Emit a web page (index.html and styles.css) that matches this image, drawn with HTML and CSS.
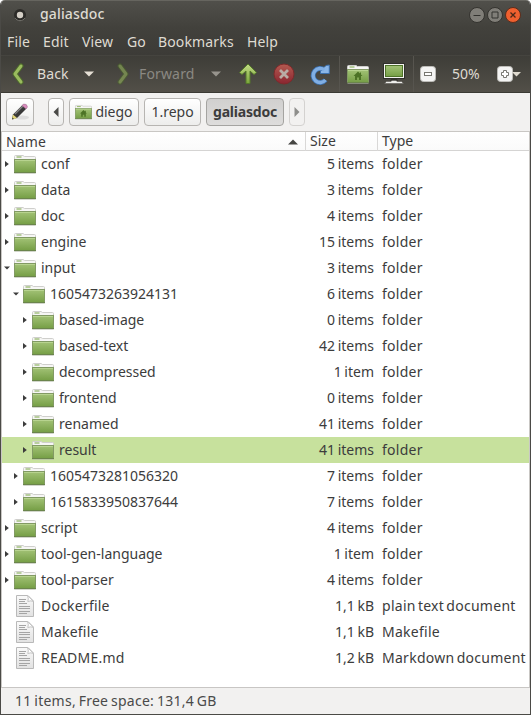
FILE: index.html
```html
<!DOCTYPE html>
<html lang="en">
<head>
<meta charset="utf-8">
<title>galiasdoc</title>
<link rel="stylesheet" href="styles.css">
</head>
<body>
<svg class="defs" aria-hidden="true">
  <defs>
    <linearGradient id="green" x1="0" y1="0" x2="0" y2="1"><stop offset="0" stop-color="#a3c377"/><stop offset="1" stop-color="#759e45"/></linearGradient>
    <linearGradient id="arrow" x1="0" y1="0" x2="0" y2="1"><stop offset="0" stop-color="#c3db86"/><stop offset="1" stop-color="#7aa63a"/></linearGradient>
    <linearGradient id="paper" x1="0" y1="0" x2="0" y2="1"><stop offset="0" stop-color="#fafafa"/><stop offset="1" stop-color="#e2e2e2"/></linearGradient>
    <linearGradient id="red" x1="0" y1="0" x2="0" y2="1"><stop offset="0" stop-color="#b45a50"/><stop offset="1" stop-color="#8a2530"/></linearGradient>
    <symbol id="folder" viewBox="0 0 22 20">
      <path d="M.5 19V2.500Q.5 1.500 1.500 1.500H9L10.500 2.500H20.500Q21.500 2.500 21.500 3.500V19Z" fill="#f6f6f5" stroke="#cfcfcc"/>
      <path d="M2.500 3H7.500" stroke="#7ba647"/>
      <rect x=".5" y="5.500" width="21" height="13" fill="url(#green)" stroke="#829a64"/>
      <path d="M1 6.500H21" stroke="#b7d38f"/>
      <path d="M0 18.700H22" stroke="#5f7a40" stroke-width=".8"/>
    </symbol>
    <symbol id="home" viewBox="0 0 22 20">
      <use href="#folder" width="22" height="20"/>
      <path d="M11 7.500L6.500 12H8V16H10V13.500H12V16H14V12H15.500L14 10.500V8.500H13V9.500Z" fill="#4d7326"/>
    </symbol>
    <symbol id="file" viewBox="0 0 20 24">
      <path d="M1.500 1.500H13L18.500 7V22.500H1.500Z" fill="url(#paper)" stroke="#b9b9b9"/>
      <path d="M12.500 1.500Q14 5 12.800 7.500Q16 6.200 18.500 7.500Z" fill="#fff" stroke="#c4c4c4"/>
      <path d="M4 5.500H11M4 7.500H10M4 9.500H12M4 12.500H15M4 14.500H15M4 17.500H15M4 19.500H12" stroke="#a5a5a5"/>
    </symbol>
    <symbol id="shut" viewBox="0 0 6 8"><path d="M1 1V7L4.800 4Z"/></symbol>
    <symbol id="open" viewBox="0 0 6 8"><path d="M0 2.500H6L3 5.500Z"/></symbol>
  </defs>
</svg>
<div class="window">
  <header class="titlebar">
    <svg class="dot" viewBox="0 0 14 14"><circle cx="7" cy="7" r="6" fill="#2c2b28"/><path d="M2 10a6 6 0 0 0 10 0" fill="none" stroke="#74736d"/><circle cx="7" cy="7" r="3.200" fill="#d4cfc6"/></svg>
    <span class="title">galiasdoc</span>
    <span class="controls">
      <svg viewBox="0 0 16 16"><circle cx="8" cy="8" r="7.500" fill="#807e78" stroke="#34332f"/><path d="M4.500 8.500H11.500" stroke="#33322e"/></svg>
      <svg viewBox="0 0 16 16"><circle cx="8" cy="8" r="7.500" fill="#807e78" stroke="#34332f"/><path d="M5 5H11V11H5Z" fill="none" stroke="#33322e"/></svg>
      <svg viewBox="0 0 16 16"><circle cx="8" cy="8" r="7.500" fill="#f0602f" stroke="#5a2d1c"/><path d="M5.500 5.500L10.500 10.500M10.500 5.500L5.500 10.500" stroke="#4b2818" stroke-width="1.300"/></svg>
    </span>
  </header>
  <nav class="menubar"><span class="m1">File</span><span class="m2">Edit</span><span class="m3">View</span><span class="m4">Go</span><span class="m5">Bookmarks</span><span>Help</span></nav>
  <div class="toolbar">
    <svg class="back" viewBox="0 0 14 22"><path d="M10 3L4 11L10 19" class="chev-edge"/><path d="M10 3L4 11L10 19" class="chev"/></svg>
    <span class="back-label">Back</span>
    <svg class="drop" viewBox="0 0 10 6"><path d="M0 .5H10L5 5.500Z" fill="#e6e0d5"/></svg>
    <svg class="forward" viewBox="0 0 14 22"><path d="M4 3L10 11L4 19" class="chev-edge"/><path d="M4 3L10 11L4 19" class="chev"/></svg>
    <span class="forward-label">Forward</span>
    <svg class="drop dim" viewBox="0 0 10 6"><path d="M0 .5H10L5 5.500Z" fill="#97948d"/></svg>
    <svg class="up" viewBox="0 0 20 24"><path d="M10 2L1.500 10.500L4 12.500L8 9V21.500H12V9L16 12.500L18.500 10.500Z" fill="url(#arrow)" stroke="#55792a" stroke-linejoin="round"/></svg>
    <svg class="stop" viewBox="0 0 22 22"><circle cx="11" cy="11" r="10" fill="url(#red)" stroke="#7e2a2b"/><path d="M7 7L15 15M15 7L7 15" stroke="#b9aca5" stroke-width="2.800"/></svg>
    <svg class="reload" viewBox="0 0 20 22"><path d="M14.500 7A7 7 0 1 0 15.500 17" fill="none" stroke="#3d71ae" stroke-width="5"/><path d="M19.300 2V10.500H10.500V8L12.500 7L9.500 5.500L14 4.500L16 2.500Z" fill="#8ab6e8" stroke="#3d71ae"/><path d="M14.500 7A7 7 0 1 0 15.500 17" fill="none" stroke="#81afe4" stroke-width="3.400"/></svg>
    <span class="divider"></span>
    <svg class="home-button" viewBox="0 0 22 20"><use href="#home" width="22" height="20"/></svg>
    <svg class="computer" viewBox="0 0 22 22"><rect x=".5" y=".5" width="21" height="15" fill="#f4f4f1" stroke="#30302c"/><rect x="2.500" y="2.500" width="17" height="11" fill="url(#green)" stroke="#4f732a"/><path d="M8 16H14L15 18H7Z" fill="#33322e"/><path d="M1.500 20.500L3.500 18.500H8L9 17.500H13L14 18.500H18.500L20.500 20.500Z" fill="#efefec" stroke="#5a5954" stroke-width=".6"/></svg>
    <span class="divider second"></span>
    <svg class="zoom" viewBox="0 0 16 16"><rect x=".5" y=".5" width="15" height="15" rx="3" fill="#f4f4f3" stroke="#bdbcb8"/><rect x="4.500" y="6.500" width="7" height="3" fill="#fff" stroke="#777670"/></svg>
    <span class="percent">50%</span>
    <svg class="zoom-in" viewBox="0 0 24 16"><rect x=".5" y=".5" width="15" height="15" rx="3" fill="#f4f4f3" stroke="#bdbcb8"/><path d="M6.500 4.500H9.500V6.500H11.500V9.500H9.500V11.500H6.500V9.500H4.500V6.500H6.500Z" fill="#fff" stroke="#777670"/><path d="M15 6H24L19.500 10.500Z" fill="#e0dbd0"/></svg>
  </div>
  <div class="pathbar">
    <span class="crumb edit"><svg viewBox="0 0 20 20"><ellipse cx="12" cy="15.500" rx="7" ry="2" fill="#ddd"/><path d="M2 17L3 12.500L12.500 3L16.500 6.500L7 16Z" fill="#383838"/><path d="M5 12L13 4" stroke="#858585" stroke-width="1.300"/><path d="M2 17.500L3 12.500L7 16Z" fill="#e5d878"/><path d="M2 17.500L2.500 15.500L4 17Z" fill="#333"/><path d="M12 3.500L13.500 2Q17 1.500 17.500 5L16 7Z" fill="#d98bbd" stroke="#996a87" stroke-width=".5"/></svg></span>
    <span class="crumb prev"><svg viewBox="0 0 6 10"><path d="M5.500 0V10L.5 5Z" fill="#4a4a48"/></svg></span>
    <span class="crumb diego"><svg viewBox="0 0 22 20"><use href="#home" width="22" height="20"/></svg>diego</span>
    <span class="crumb repo">1.repo</span>
    <span class="crumb current">galiasdoc</span>
    <span class="crumb next"><svg viewBox="0 0 6 10"><path d="M.5 0V10L5.500 5Z" fill="#8e8e8b"/></svg></span>
  </div>
  <div class="columns"><span class="c-name">Name<svg viewBox="0 0 10 6"><path d="M0 5.500H10L5 .5Z" fill="#454542"/></svg></span><span class="c-size">Size</span><span class="c-type">Type</span></div>
  <main class="list" id="list"></main>
  <footer class="status">11 items, Free space: 131,4 GB</footer>
</div>
<script src="list.js"></script>
</body>
</html>
```
FILE: list.js
```js
// depth, expander state, name, size, type
const entries = [
  [0, "shut", "conf", "5 items", "folder"],
  [0, "shut", "data", "3 items", "folder"],
  [0, "shut", "doc", "4 items", "folder"],
  [0, "shut", "engine", "15 items", "folder"],
  [0, "open", "input", "3 items", "folder"],
  [1, "open", "1605473263924131", "6 items", "folder"],
  [2, "shut", "based-image", "0 items", "folder"],
  [2, "shut", "based-text", "42 items", "folder"],
  [2, "shut", "decompressed", "1 item", "folder"],
  [2, "shut", "frontend", "0 items", "folder"],
  [2, "shut", "renamed", "41 items", "folder"],
  [2, "shut", "result", "41 items", "folder", true],
  [1, "shut", "1605473281056320", "7 items", "folder"],
  [1, "shut", "1615833950837644", "7 items", "folder"],
  [0, "shut", "script", "4 items", "folder"],
  [0, "shut", "tool-gen-language", "1 item", "folder"],
  [0, "shut", "tool-parser", "4 items", "folder"],
  [0, "", "Dockerfile", "1,1 kB", "plain text document"],
  [0, "", "Makefile", "1,1 kB", "Makefile"],
  [0, "", "README.md", "1,2 kB", "Markdown document"]
];
document.getElementById("list").innerHTML = entries.map(([depth, state, name, size, type, selected]) => `
  <div class="row${selected ? " selected" : ""}">
    <span class="name depth-${depth}">
      <svg class="expander">${state ? `<use href="#${state}"/>` : ""}</svg>
      <svg class="${state ? "folder" : "file"}"><use href="#${state ? "folder" : "file"}"/></svg>
      <span class="${state ? "" : "file-name"}">${name}</span>
    </span>
    <span class="size">${size}</span>
    <span class="type">${type}</span>
  </div>`).join("");
```
FILE: styles.css
```css
* { box-sizing: border-box; }
body { margin: 0; background: #fff; font: 14px/20px "Noto Sans", sans-serif; color: #3c3c3c; }
.defs { position: absolute; width: 0; height: 0; }
svg { flex: none; display: block; }
.window { width: 531px; height: 715px; display: flex; flex-direction: column; border: 1px solid #4b4a46; border-top: 0; border-radius: 5px 5px 0 0; overflow: hidden; background: #f2f1f0; }
.titlebar { height: 28px; flex: none; display: flex; align-items: center; padding: 0 9px 0 12px; color: #dfdbd2; font-weight: 500; letter-spacing: .15px; background: linear-gradient(#504f4a, #42413c); border-top: 1px solid #66655f; }
.dot { width: 14px; height: 14px; }
.title { margin-left: 13px; position: relative; top: -1px; }
.controls { margin-left: auto; display: flex; gap: 2px; }
.controls svg { width: 16px; height: 16px; }
.menubar { height: 28px; flex: none; display: flex; align-items: center; padding-left: 6px; color: #dfdbd2; letter-spacing: .15px; background: linear-gradient(#42413c, #3c3b37); border-bottom: 1px solid #45443f; }
.m1 { width: 36px; } .m2 { width: 39px; } .m3 { width: 45px; } .m4 { width: 31px; } .m5 { width: 89px; }
.toolbar { height: 37px; flex: none; display: flex; align-items: center; color: #dfdbd2; letter-spacing: .15px; background: linear-gradient(#3e3d38, #524f48); border-bottom: 1px solid #3b3a34; }
.back, .forward { width: 14px; height: 22px; margin-left: 10px; }
.chev, .chev-edge { fill: none; stroke: #9abb5e; stroke-width: 3; stroke-linecap: round; stroke-linejoin: round; }
.chev-edge { stroke: #4e6b2c; stroke-width: 5; }
.forward { margin-left: 22px; opacity: .55; }
.back-label { margin-left: 12px; width: 34px; }
.forward-label { margin-left: 9px; width: 58px; color: #8b8983; }
.drop { width: 10px; height: 6px; margin-left: 13px; }
.drop.dim { margin-left: 14px; }
.up { width: 20px; height: 24px; margin-left: 17px; }
.stop { width: 22px; height: 22px; margin-left: 15px; }
.reload { width: 20px; height: 22px; margin-left: 15px; }
.divider { width: 1px; height: 36px; background: #57554f; margin-left: 9px; }
.home-button { width: 22px; height: 20px; margin-left: 7px; }
.computer { width: 22px; height: 22px; margin-left: 14px; }
.divider.second { margin-left: 8px; }
.zoom { width: 16px; height: 16px; margin-left: 6px; }
.percent { margin-left: 16px; width: 30px; letter-spacing: 0; }
.zoom-in { width: 24px; height: 16px; margin-left: 15px; }
.pathbar { height: 39px; flex: none; display: flex; align-items: center; padding-left: 5px; border-bottom: 1px solid #c9c7c4; }
.crumb { height: 28px; display: flex; align-items: center; justify-content: center; border: 1px solid #b7b5b2; border-radius: 4px; background: linear-gradient(#fff, #ededec); }
.edit { width: 28px; } .edit svg { width: 20px; height: 20px; }
.prev { width: 16px; margin-left: 14px; }
.prev svg, .next svg { width: 6px; height: 10px; }
.diego { width: 70px; margin-left: 5px; gap: 3px; } .diego svg { width: 17px; height: 16px; }
.repo { width: 57px; margin-left: 5px; }
.current { width: 78px; margin-left: 5px; font-weight: 700; letter-spacing: -.2px; background: linear-gradient(#d1d0cf, #dedddc); border-color: #a5a4a1; }
.next { width: 16px; margin-left: 5px; border-color: #d4d2d0; background: #f2f1f0; }
.columns { height: 19px; flex: none; display: grid; grid-template-columns: 304px 72px 1fr; border: solid #c9c7c4; border-width: 0 1px; background: linear-gradient(#fff, #fafafa); box-shadow: inset 0 -1px #d5d4d3; }
.columns span { line-height: 18px; padding-left: 4px; }
.c-name { display: flex; align-items: center; justify-content: space-between; border-right: 1px solid #d9d8d7; padding-right: 7px; letter-spacing: .15px; }
.c-size { border-right: 1px solid #d9d8d7; }
.c-name svg { width: 10px; height: 6px; }
.list { flex: 1; background: #fff; border: solid #c9c7c4; border-width: 0 1px; }
.row { height: 26px; display: grid; grid-template-columns: 304px 68px 1fr; align-items: center; }
.selected { background: #c7e19d; }
.name { display: flex; align-items: center; padding-left: 2px; }
.depth-1 { padding-left: 11px; }
.depth-2 { padding-left: 20px; }
.expander { width: 6px; height: 8px; fill: #3c3c3c; }
.folder { width: 22px; height: 20px; margin: 0 5px 0 4px; }
.file { width: 20px; height: 24px; margin: 0 6px 0 5px; }
.file-name { letter-spacing: .22px; }
.size { text-align: right; word-spacing: -1px; }
.type { padding-left: 8px; white-space: nowrap; letter-spacing: .27px; word-spacing: -1.7px; }
.status { height: 27px; flex: none; padding: 3px 0 0 14px; border-top: 1px solid #c8c6c4; color: #4a4a4a; letter-spacing: .25px; word-spacing: -1.1px; }
```
